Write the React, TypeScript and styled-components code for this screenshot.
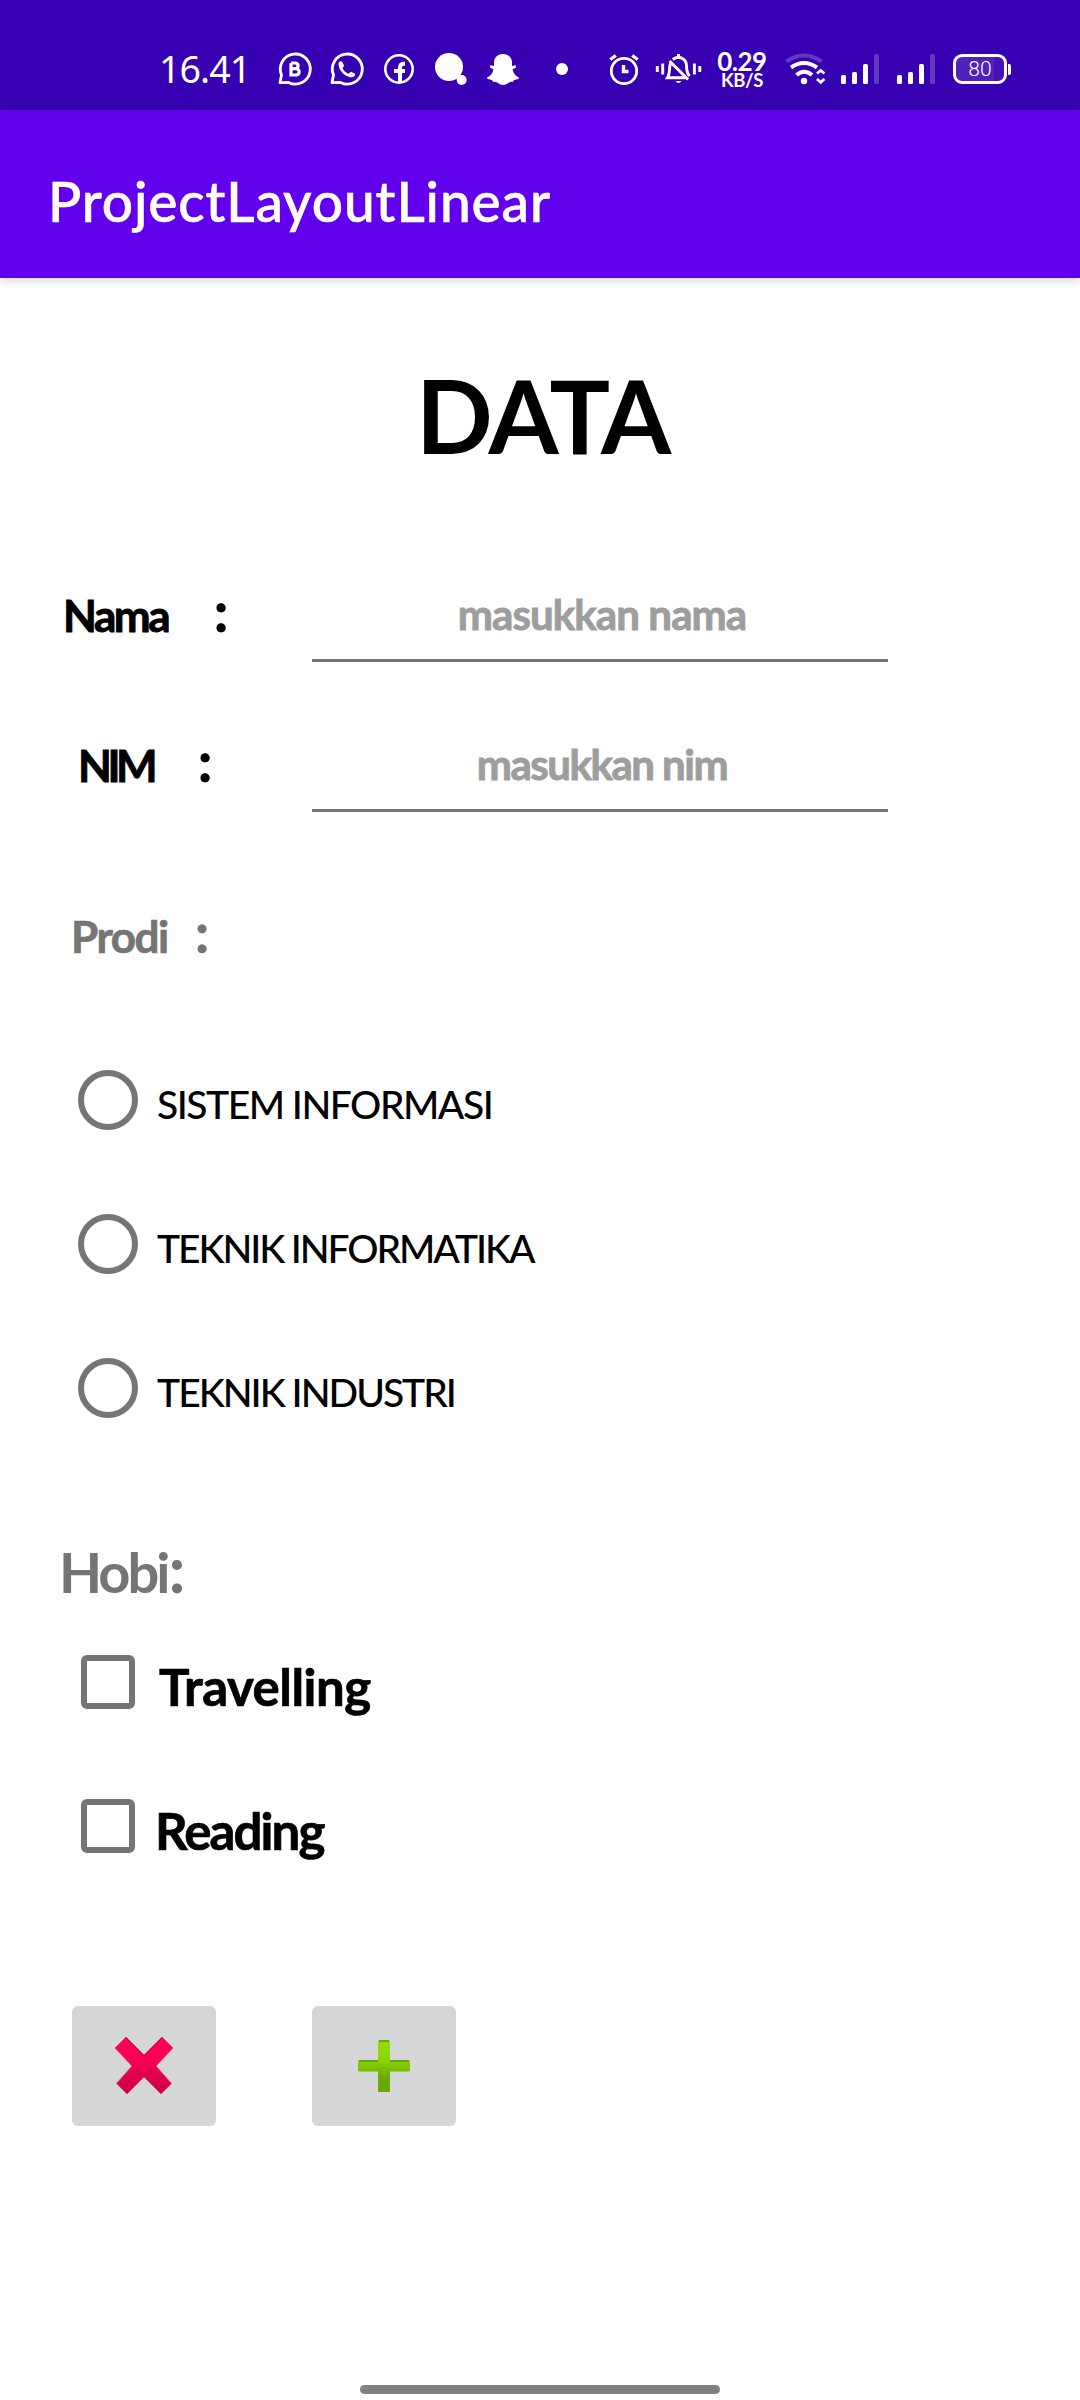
import React from "react";
import styled, { createGlobalStyle } from "styled-components";

const GlobalStyle = createGlobalStyle`
  * { box-sizing: border-box; }
  body { margin: 0; background: #fff; }
`;

const Screen = styled.div`
  display: flex;
  flex-direction: column;
  width: 1080px;
  height: 2400px;
  background: #fff;
  color: #000;
  font-family: Lato, "Open Sans", sans-serif;
  overflow: hidden;
`;

const StatusBar = styled.header`
  display: flex;
  align-items: center;
  flex: none;
  height: 110px;
  padding: 28px 0 0 159px;
  background: #3700b3;
  color: #fff;
`;

const Clock = styled.span`
  width: 115px;
  font: 400 37.5px/40px "Noto Sans", sans-serif;
  letter-spacing: -0.9px;
`;

const Icon = styled.svg<{ $gap?: number }>`
  flex: none;
  height: 40px;
  margin-right: ${(p) => p.$gap ?? 0}px;
  fill: none;
  stroke: #fff;
`;

const Speed = styled.div`
  display: flex;
  flex-direction: column;
  align-items: center;
  width: 56px;
  margin-right: 14px;
  font-family: Lato, sans-serif;
  font-weight: 700;
  white-space: nowrap;
`;

const SpeedValue = styled.span`
  font-size: 26px;
  line-height: 22px;
  letter-spacing: -0.5px;
`;

const SpeedUnit = styled.span`
  font-size: 18.5px;
  line-height: 17px;
  letter-spacing: -0.4px;
`;

const Battery = styled.div`
  display: flex;
  align-items: center;
  justify-content: center;
  width: 54px;
  height: 30px;
  border: 3px solid #fff;
  border-radius: 9px;
  background: linear-gradient(90deg, #5022bc 80%, #4511b8 80%);
  font: 300 21px/24px Roboto, sans-serif;
`;

const BatteryTip = styled.div`
  width: 3px;
  height: 11px;
  margin-left: 1px;
  border-radius: 0 2px 2px 0;
  background: #fff;
`;

const AppBar = styled.div`
  display: flex;
  align-items: center;
  flex: none;
  height: 168px;
  padding: 13px 0 0 48px;
  background: #6200ee;
  box-shadow: 0 2px 10px rgba(0, 0, 0, 0.18);
  color: #fff;
`;

const AppTitle = styled.h1`
  margin: 0;
  font-size: 55px;
  font-weight: 500;
  letter-spacing: 0.9px;
  -webkit-text-stroke: 0.6px currentColor;
`;

const Form = styled.main`
  display: flex;
  flex-direction: column;
  flex: 1;
`;

const Heading = styled.h2`
  margin: 0;
  height: 262px;
  padding: 12px 0 0 5px;
  font-size: 101px;
  font-weight: 700;
  line-height: 250px;
  letter-spacing: -2px;
  text-align: center;
`;

const FieldRow = styled.label`
  display: flex;
  align-items: center;
  height: 150px;
  font-size: 44px;
  font-weight: 700;
  -webkit-text-stroke: 0.9px currentColor;
`;

const Name = styled.span<{ $left: number; $width: number; $spacing: number }>`
  width: ${(p) => p.$width}px;
  margin-left: ${(p) => p.$left}px;
  letter-spacing: ${(p) => p.$spacing}px;
  white-space: nowrap;
`;

const Colon = styled.span<{ $width: number }>`
  width: ${(p) => p.$width}px;
  padding-bottom: 9px;
  font-size: 55px;
`;

const Input = styled.input<{ $spacing: number }>`
  align-self: flex-start;
  width: 576px;
  height: 122px;
  padding: 28px 0 0 4px;
  border: 0;
  border-bottom: 3px solid #757575;
  border-radius: 0;
  outline: 0;
  background: transparent;
  font: 700 42px Lato, sans-serif;
  letter-spacing: ${(p) => p.$spacing}px;
  text-align: center;
  &::placeholder {
    color: #9e9e9e;
    opacity: 1;
    -webkit-text-stroke: 0.9px #9e9e9e;
  }
`;

const ProdiLabel = styled.div`
  display: flex;
  align-items: center;
  height: 188px;
  padding-top: 4px;
  color: #757575;
  font-size: 44px;
  font-weight: 700;
  -webkit-text-stroke: 0.7px currentColor;
`;

const HobiLabel = styled.div`
  display: flex;
  align-items: baseline;
  height: 150px;
  padding: 69px 0 0 59px;
  color: #757575;
  font-size: 56px;
  font-weight: 700;
  line-height: 78px;
  letter-spacing: -3px;
`;

const HobiColon = styled.span`
  margin-left: 1px;
  font-size: 66px;
`;

const Option = styled.label`
  display: flex;
  align-items: center;
  height: 144px;
  padding-left: 78px;
`;

const Radio = styled.span`
  width: 60px;
  height: 60px;
  border: 6px solid #757575;
  border-radius: 50%;
`;

const Check = styled.span`
  width: 54px;
  height: 54px;
  margin: 0 3px;
  border: 6px solid #757575;
  border-radius: 6px;
`;

const RadioText = styled.span<{ $spacing: number }>`
  padding: 8px 0 0 19px;
  font-size: 39px;
  font-weight: 500;
  letter-spacing: ${(p) => p.$spacing}px;
`;

const CheckText = styled.span<{ $left: number; $spacing: number }>`
  padding: 8px 0 0 ${(p) => p.$left}px;
  font-size: 51px;
  font-weight: 700;
  letter-spacing: ${(p) => p.$spacing}px;
  -webkit-text-stroke: 0.7px currentColor;
`;

const Actions = styled.div`
  display: flex;
  gap: 96px;
  padding: 108px 0 0 72px;
`;

const ActionButton = styled.button`
  display: flex;
  align-items: center;
  justify-content: center;
  width: 144px;
  height: 120px;
  padding: 0;
  border: 0;
  border-radius: 6px;
  background: #d6d8d7;
`;

const HomeBar = styled.div`
  width: 360px;
  height: 9px;
  margin: auto auto 6px;
  border-radius: 5px;
  background: #808080;
`;

function SignalIcon({ gap }: { gap: number }) {
  return (
    <Icon width="38" viewBox="0 0 38 40" $gap={gap}>
      <g fill="#fff" stroke="none">
        <rect x="0" y="26" width="5" height="9" rx="1.5" />
        <rect x="11" y="23" width="5" height="12" rx="1.5" />
        <rect x="22" y="15" width="5" height="20" rx="1.5" />
        <rect x="33" y="5" width="5" height="30" rx="1.5" opacity=".22" />
      </g>
    </Icon>
  );
}

function StatusIcons() {
  return (
    <>
      <Icon width="40" viewBox="274 49 40 40" $gap={12} strokeWidth="2.8">
        <path d="M280 82.700 L281.500 74.900 A15 15 0 1 1 288.500 82.400 Z" strokeLinejoin="round" />
        <path d="M291 63 V75 H296.500 A3.200 3.200 0 0 0 296.500 68.700 H291 M291 63 H295.700 A2.900 2.900 0 0 1 295.700 68.700" strokeWidth="3.200" />
      </Icon>
      <Icon width="40" viewBox="326 49 40 40" $gap={12} strokeWidth="2.8">
        <path d="M332 82.700 L333.500 74.900 A15 15 0 1 1 340.500 82.400 Z" strokeLinejoin="round" />
        <path d="M338.500 64 C338.500 61.500 341 60.600 342.300 62 L344 65.500 C344.200 66.500 342.500 67.700 342.700 68.500 C344 71 345.800 72.800 348.300 73.700 C349.400 73.800 350 71.800 351.200 71.800 L355 73.700 C355.800 76 353 77.600 350.500 77.200 C344 76 339 70.500 338.500 64Z" fill="#fff" stroke="none" />
      </Icon>
      <Icon width="40" viewBox="378 49 40 40" $gap={12} strokeWidth="2.6">
        <circle cx="399" cy="69" r="13.7" />
        <path d="M400 83 V67.500 Q400 63.500 405 63.500 M394 71 H405" strokeWidth="4" />
      </Icon>
      <Icon width="40" viewBox="430 49 40 40" $gap={12}>
        <g fill="#fff" stroke="none">
          <circle cx="449" cy="67" r="14" />
          <circle cx="461.7" cy="80" r="5" />
        </g>
      </Icon>
      <Icon width="40" viewBox="482 49 40 40" $gap={30}>
        <path d="M503 54 C508 54 511.700 57 512 62 V66 L515.700 65.200 L516 67.500 L512.500 69.500 C513.500 73.500 515.500 76 519 77.500 C519 79.500 515.500 79.700 514 80 L513 82 C509 81 507 85 503 85 C499 85 497 81 493 82 L492 80 C490.500 79.700 487 79.500 487 77.500 C490.500 76 492.500 73.500 493.500 69.500 L490 67.500 L490.300 65.200 L494 66 V62 C494.300 57 498 54 503 54Z" fill="#fff" stroke="none" />
      </Icon>
      <Icon width="20" viewBox="552 49 20 40" $gap={34}>
        <circle cx="562" cy="69" r="6" fill="#fff" stroke="none" />
      </Icon>
      <Icon width="36" viewBox="606 49 36 40" $gap={12} strokeWidth="2.8">
        <circle cx="624" cy="71" r="12.7" />
        <path d="M623.500 65 V71.500 H628.500 M610.300 59.500 L615.800 55.500 M637.700 59.500 L632.200 55.500" strokeWidth="3.400" />
      </Icon>
      <Icon width="50" viewBox="654 49 50 40" $gap={10} strokeWidth="2.9">
        <path d="M670.500 63.500 C668.700 67 670.500 73 667.500 77.700 H685 M672.800 59.500 C679 54.500 686.500 59 686.500 66 C686.500 70 687 73 689.500 76" />
        <path d="M669.500 61 L688 79.500" strokeWidth="3" />
        <path d="M675.500 81 Q678.500 85 681.500 81Z" fill="#fff" stroke="none" />
        <path d="M678.500 54 V57 M657.300 66 V72 M662.700 63.500 V74.500 M694.400 63.500 V74.500 M699.800 66 V72" />
      </Icon>
      <Speed>
        <SpeedValue>0.29</SpeedValue>
        <SpeedUnit>KB/S</SpeedUnit>
      </Speed>
      <Icon width="42" viewBox="784 49 42 40" $gap={15}>
        <path d="M786.500 61.500 Q804 49.500 821.500 61.500" strokeWidth="4" opacity=".22" />
        <path d="M791 67.500 Q804 58.500 817 67.500 M796.500 75 Q804 68.500 812 75" strokeWidth="4" />
        <circle cx="804" cy="81" r="3.200" fill="#fff" stroke="none" />
        <path d="M817 73.500 L820.700 70.500 L824.400 73.500 M817 79 L820.700 82.300 L824.400 79" strokeWidth="2.800" />
      </Icon>
      <SignalIcon gap={18} />
      <SignalIcon gap={18} />
    </>
  );
}

function CrossIcon() {
  return (
    <svg width="62" height="62" viewBox="0 0 62 62">
      <defs>
        <linearGradient id="cross" x1="0" y1="0" x2="0" y2="1">
          <stop offset="0" stopColor="#ff0057" />
          <stop offset=".35" stopColor="#fa0055" />
          <stop offset="1" stopColor="#c90044" />
        </linearGradient>
      </defs>
      <path d="M13 2 L31 20 L49 2 L60 13 L43 31 L58.500 48.500 L48 59 L31 42 L14 59 L3.500 48.500 L19 31 L2 13Z" fill="url(#cross)" stroke="#e2477b" strokeWidth="1" strokeLinejoin="round" />
      <path d="M13 2.500 L31 20.500 L49 2.500" fill="none" stroke="#b5103f" strokeWidth="1" />
    </svg>
  );
}

function PlusIcon() {
  return (
    <svg width="54" height="54" viewBox="0 0 54 54">
      <defs>
        <linearGradient id="plus" x1="0" y1="0" x2="0" y2="1">
          <stop offset="0" stopColor="#94e000" />
          <stop offset=".4" stopColor="#88d400" />
          <stop offset=".7" stopColor="#6dab00" />
          <stop offset="1" stopColor="#69a500" />
        </linearGradient>
      </defs>
      <path d="M22.500 1 H31.500 Q33 1 33 2.500 V21 H51.500 Q53 21 53 22.500 V31 Q53 32.500 51.500 32.500 H33 V51.500 Q33 53 31.500 53 H22.500 Q21 53 21 51.500 V32.500 H2.500 Q1 32.500 1 31 V22.500 Q1 21 2.500 21 H21 V2.500 Q21 1 22.500 1Z" fill="url(#plus)" />
      <path d="M22 2 H32 M2 22 H21 M33 22 H52" stroke="#5f9500" strokeWidth="1.300" />
    </svg>
  );
}

export default function App() {
  return (
    <Screen>
      <GlobalStyle />
      <StatusBar>
        <Clock>16.41</Clock>
        <StatusIcons />
        <Battery>80</Battery>
        <BatteryTip />
      </StatusBar>
      <AppBar>
        <AppTitle>ProjectLayoutLinear</AppTitle>
      </AppBar>
      <Form>
        <Heading>DATA</Heading>
        <FieldRow>
          <Name $left={63} $width={151} $spacing={-2.4}>Nama</Name>
          <Colon $width={98}>:</Colon>
          <Input $spacing={-0.9} placeholder="masukkan nama" />
        </FieldRow>
        <FieldRow>
          <Name $left={78} $width={120} $spacing={-4.5}>NIM</Name>
          <Colon $width={114}>:</Colon>
          <Input $spacing={-1.5} placeholder="masukkan nim" />
        </FieldRow>
        <ProdiLabel>
          <Name $left={71} $width={124} $spacing={-1.5}>Prodi</Name>
          <Colon $width={20}>:</Colon>
        </ProdiLabel>
        <Option>
          <Radio />
          <RadioText $spacing={-1.5}>SISTEM INFORMASI</RadioText>
        </Option>
        <Option>
          <Radio />
          <RadioText $spacing={-2.1}>TEKNIK INFORMATIKA</RadioText>
        </Option>
        <Option>
          <Radio />
          <RadioText $spacing={-2}>TEKNIK INDUSTRI</RadioText>
        </Option>
        <HobiLabel>Hobi<HobiColon>:</HobiColon></HobiLabel>
        <Option>
          <Check />
          <CheckText $left={21} $spacing={-0.5}>Travelling</CheckText>
        </Option>
        <Option>
          <Check />
          <CheckText $left={17} $spacing={-1.9}>Reading</CheckText>
        </Option>
        <Actions>
          <ActionButton aria-label="Cancel"><CrossIcon /></ActionButton>
          <ActionButton aria-label="Add"><PlusIcon /></ActionButton>
        </Actions>
        <HomeBar />
      </Form>
    </Screen>
  );
}
